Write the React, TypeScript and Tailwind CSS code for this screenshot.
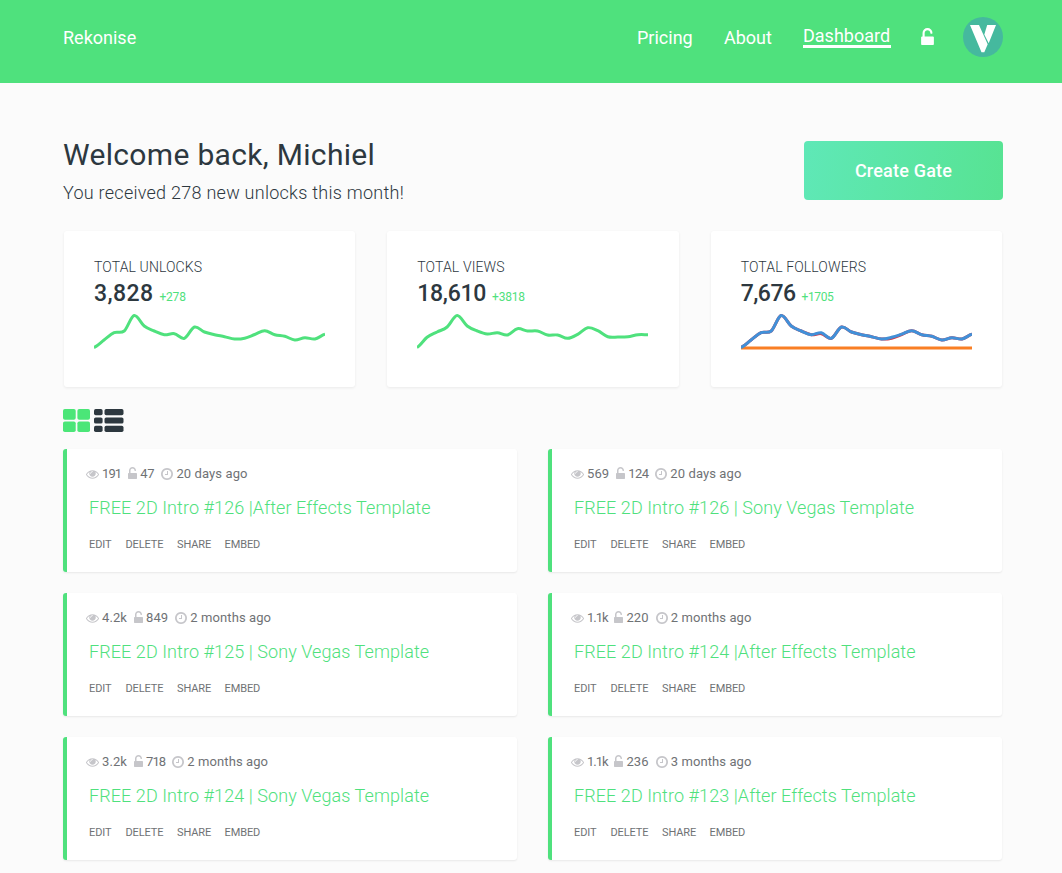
import type { ReactNode } from 'react'

// Icon outlines on a 1792 unit grid
const ICONS = {
  eye: 'M1664 960q-152-236-381-353 61 104 61 225 0 185-131.5 316.5t-316.5 131.5-316.5-131.5-131.5-316.5q0-121 61-225-229 117-381 353 133 205 333.5 326.5t434.5 121.5 434.5-121.5 333.5-326.5zm-720-384q0-20-14-34t-34-14q-125 0-214.5 89.5t-89.5 214.5q0 20 14 34t34 14 34-14 14-34q0-86 61-147t147-61q20 0 34-14t14-34zm848 384q0 34-20 69-140 230-376.5 368.5t-499.5 138.5-499.5-139-376.5-368q-20-35-20-69t20-69q140-229 376.5-368t499.5-139 499.5 139 376.5 368q20 35 20 69z',
  unlock: 'M1376 768q40 0 68 28t28 68v576q0 40-28 68t-68 28h-960q-40 0-68-28t-28-68v-576q0-40 28-68t68-28h32v-320q0-185 131.5-316.5t316.5-131.5 316.5 131.5 131.5 316.5q0 26-19 45t-45 19h-64q-26 0-45-19t-19-45q0-106-75-181t-181-75-181 75-75 181v320h736z',
  clock: 'M1024 544v448q0 14-9 23t-23 9h-320q-14 0-23-9t-9-23v-64q0-14 9-23t23-9h224v-352q0-14 9-23t23-9h64q14 0 23 9t9 23zm416 352q0-148-73-273t-198-198-273-73-273 73-198 198-73 273 73 273 198 198 273 73 273-73 198-198 73-273zm224 0q0 209-103 385.5t-279.5 279.5-385.5 103-385.5-103-279.5-279.5-103-385.5 103-385.5 279.5-279.5 385.5-103 385.5 103 279.5 279.5 103 385.5z',
}

interface IconProps {
  name: keyof typeof ICONS
  viewBox: string
  className: string
}

function Icon({ name, viewBox, className }: IconProps) {
  return (
    <svg viewBox={viewBox} className={className} fill="currentColor">
      <path d={ICONS[name]} />
    </svg>
  )
}

const UNLOCKS = [32.5, 25, 17.7, 16, 0.5, 11, 16, 19.7, 18.7, 23.3, 12, 17, 19.7, 21.7, 24, 23.2, 19.5, 15.7, 19.7, 21.3, 25, 22.7, 24, 19.3]
const VIEWS = [32.5, 22.3, 17, 12, 0.5, 11, 16, 19, 17.7, 20, 13.7, 16, 16, 20, 20, 23.3, 19.3, 12.7, 15.7, 21.7, 22, 21.7, 19.7, 19.7]
const FOLLOWERS = [32.5, 25, 17.7, 16, 0.5, 11, 16, 19.7, 17.7, 23.3, 12, 17, 19.7, 21.7, 24, 22.3, 19.2, 15.7, 19.7, 21.3, 25, 22.7, 24, 19.3]

// Smooth line through the values, spread evenly over 231px
function linePath(values: number[]) {
  const step = 231 / (values.length - 1)
  const at = (i: number) => values[Math.min(Math.max(i, 0), values.length - 1)]
  let d = `M0 ${at(0) + 3}`
  for (let i = 0; i < values.length - 1; i++) {
    const c1 = at(i) + (at(i + 1) - at(i - 1)) / 6 + 3
    const c2 = at(i + 1) - (at(i + 2) - at(i)) / 6 + 3
    d += `C${(i + 0.333) * step} ${c1} ${(i + 0.667) * step} ${c2} ${(i + 1) * step} ${at(i + 1) + 3}`
  }
  return d
}

interface StatCardProps {
  label: string
  value: string
  delta: string
  valueClass: string
  deltaClass: string
  children: ReactNode
}

function StatCard({ label, value, delta, valueClass, deltaClass, children }: StatCardProps) {
  return (
    <div className="h-[156px] rounded-[3px] bg-white px-[30px] pt-[27px] shadow-[0_1px_3px_rgba(0,0,0,0.07)]">
      <div className="h-[19px] text-[14px] leading-[19px] font-light tracking-[0.12px] whitespace-nowrap">{label}</div>
      <div className="flex h-[33px] items-baseline whitespace-nowrap">
        <span className={`text-[23px] leading-[33px] font-medium ${valueClass}`}>{value}</span>
        <span className={`text-[12px] text-[#4fe17d] ${deltaClass}`}>{delta}</span>
      </div>
      <svg width="231" height="40" viewBox="0 0 231 40" fill="none" strokeWidth="3" className="mt-[2px]">
        {children}
      </svg>
    </div>
  )
}

interface Gate {
  views: string
  viewsClass?: string
  unlocks: string
  unlocksClass?: string
  age: string
  title: string
}

const GATES: Gate[] = [
  { views: '191', viewsClass: 'tracking-[-0.9px]', unlocks: '47', unlocksClass: 'tracking-[-0.2px]', age: '20 days ago', title: 'FREE 2D Intro #126 |After Effects Template' },
  { views: '569', unlocks: '124', unlocksClass: 'tracking-[-0.6px]', age: '20 days ago', title: 'FREE 2D Intro #126 | Sony Vegas Template' },
  { views: '4.2k', unlocks: '849', age: '2 months ago', title: 'FREE 2D Intro #125 | Sony Vegas Template' },
  { views: '1.1k', viewsClass: 'tracking-[-1.05px]', unlocks: '220', age: '2 months ago', title: 'FREE 2D Intro #124 |After Effects Template' },
  { views: '3.2k', unlocks: '718', unlocksClass: 'tracking-[-0.9px]', age: '2 months ago', title: 'FREE 2D Intro #124 | Sony Vegas Template' },
  { views: '1.1k', viewsClass: 'tracking-[-1.05px]', unlocks: '236', age: '3 months ago', title: 'FREE 2D Intro #123 |After Effects Template' },
]

function GateCard({ gate }: { gate: Gate }) {
  return (
    <div className="h-[123px] rounded-[3px] border-l-4 border-[#4fe17d] bg-white pl-[19px] shadow-[0_1px_2px_rgba(0,0,0,0.08)]">
      <div className="mt-[16px] flex h-[18px] items-center text-[13px] tracking-[0.1px] whitespace-nowrap text-[#6f7275]">
        <Icon name="eye" viewBox="0 384 1792 1152" className="mr-[3px] h-[9px] w-[13px] text-[#c6c6ca]" />
        <span className={gate.viewsClass}>{gate.views}</span>
        <Icon name="unlock" viewBox="320 0 1152 1536" className="mr-[3px] mb-[2px] ml-[7px] h-[12px] w-[9px] text-[#c6c6ca]" />
        <span className={gate.unlocksClass}>{gate.unlocks}</span>
        <Icon name="clock" viewBox="128 128 1536 1536" className="mr-[3px] ml-[7px] h-[12px] w-[12px] text-[#c6c6ca]" />
        <span>{gate.age}</span>
      </div>
      <h3 className="mt-[12px] ml-[3px] h-[26px] text-[18px] leading-[26px] font-light tracking-[0.08px] whitespace-nowrap text-[#4fe17d]">
        {gate.title}
      </h3>
      <div className="mt-[16px] ml-[3px] flex gap-[14px] text-[11px] leading-[16px] tracking-[-0.1px] text-[#6f7275]">
        <span className="w-[22.5px]">EDIT</span>
        <span className="w-[37.5px]">DELETE</span>
        <span className="w-[33.5px]">SHARE</span>
        <span>EMBED</span>
      </div>
    </div>
  )
}

export default function App() {
  return (
    <div className="h-[873px] w-[1062px] overflow-hidden bg-[#fbfbfb] font-['Roboto','Liberation_Sans',sans-serif] text-[#2d383f]">
      <header className="flex h-[83px] items-start justify-between bg-[#4fe17d] pr-[59px] pl-[63px] text-[18px] leading-[26px] text-white">
        <span className="mt-[25px]">Rekonise</span>
        <nav className="flex items-start">
          <span className="mt-[25px] w-[87px]">Pricing</span>
          <span className="mt-[25px] w-[79px]">About</span>
          <span className="mt-[25px] h-[23px] w-[88px] border-b-3 border-white leading-[22px]">Dashboard</span>
          <Icon name="unlock" viewBox="320 0 1152 1536" className="mt-[28px] ml-[30px] h-[17px] w-[13px]" />
          <svg width="40" height="40" viewBox="0 0 40 40" className="mt-[17px] ml-[29px]">
            <circle cx="20" cy="20" r="20" fill="#45b99e" />
            <path d="M7 8H16L24.7 27.3L21.3 35.2H18.5Z M24.2 8H33L25.7 26.3L21.3 17.5Z" fill="#fff" />
          </svg>
        </nav>
      </header>

      <main className="pr-[59px] pl-[63px]">
        <div className="flex h-[148px] items-start justify-between">
          <div className="pt-[52px]">
            <h1 className="h-[40px] text-[30px] leading-[40px] tracking-[0.32px] whitespace-nowrap">Welcome back, Michiel</h1>
            <p className="mt-[5px] text-[18px] leading-[26px] font-light tracking-[0.26px] whitespace-nowrap">You received 278 new unlocks this month!</p>
          </div>
          <button className="mt-[58px] h-[59px] w-[199px] rounded-[4px] bg-linear-[100deg,#5fe8b7,#57e392] text-[18px] font-medium tracking-[0.2px] text-white">
            Create Gate
          </button>
        </div>

        <div className="grid grid-cols-3 gap-x-[32px] px-px">
          <StatCard label="TOTAL UNLOCKS" value="3,828" delta="+278" valueClass="tracking-[0.4px]" deltaClass="ml-[6px] tracking-[-0.2px]">
            <path d={linePath(UNLOCKS)} stroke="#4fe17d" />
          </StatCard>
          <StatCard label="TOTAL VIEWS" value="18,610" delta="+3818" valueClass="tracking-[-0.3px]" deltaClass="ml-[6px] tracking-[-0.2px]">
            <path d={linePath(VIEWS)} stroke="#4fe17d" />
          </StatCard>
          <StatCard label="TOTAL FOLLOWERS" value="7,676" delta="+1705" valueClass="tracking-[-0.5px]" deltaClass="ml-[6px] tracking-[-0.4px]">
            <path d={linePath(UNLOCKS)} stroke="#d8343f" />
            <path d="M0 36H231" stroke="#f97f24" />
            <path d={linePath(FOLLOWERS)} stroke="#4190d8" />
          </StatCard>
        </div>

        <div className="mt-[22px] flex h-[23px] gap-[4px]">
          <svg width="27" height="23" viewBox="0 0 27 23" fill="#4be678">
            <rect width="12.7" height="10.7" rx="1.8" />
            <rect x="14.4" width="12.6" height="10.7" rx="1.8" />
            <rect y="12.5" width="12.7" height="10.5" rx="1.8" />
            <rect x="14.4" y="12.5" width="12.6" height="10.5" rx="1.8" />
          </svg>
          <svg width="30" height="23" viewBox="0 0 30 23" fill="#2d383f">
            {[0, 8.4, 16.8].map((y) => (
              <g key={y}>
                <rect y={y} width="8.6" height="6.2" rx="1.7" />
                <rect x="10.5" y={y} width="19" height="6.2" rx="1.7" />
              </g>
            ))}
          </svg>
        </div>

        <div className="mt-[17px] grid grid-cols-2 gap-x-[31px] gap-y-[21px] pr-px">
          {GATES.map((gate) => (
            <GateCard key={gate.title} gate={gate} />
          ))}
        </div>
      </main>
    </div>
  )
}
